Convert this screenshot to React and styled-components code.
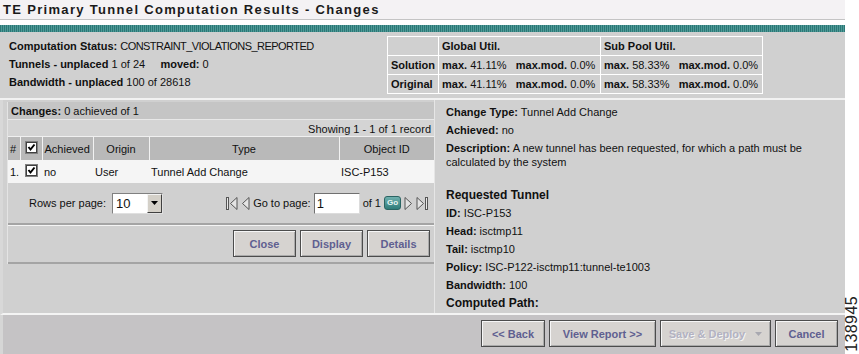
import React from 'react'
import styled, { createGlobalStyle } from 'styled-components'

const GlobalStyle = createGlobalStyle`
  body {
    margin: 0;
    background: #fff;
    font-family: 'Liberation Sans', Arial, sans-serif;
    font-size: 11px;
    color: #111;
  }
`

const Page = styled.div`
  display: flex;
  width: 859px;
  height: 354px;
  overflow: hidden;
`

const Main = styled.div`
  width: 845px;
  flex-shrink: 0;
  display: flex;
  flex-direction: column;
`

const Side = styled.div`
  flex: 1;
  min-width: 0;
  display: flex;
  align-items: flex-end;
  justify-content: center;
  padding-bottom: 2px;
`

const FigId = styled.span`
  writing-mode: vertical-rl;
  transform: rotate(180deg);
  font-size: 16px;
  line-height: 14px;
  color: #222;
  letter-spacing: 0.4px;
`

const Title = styled.div`
  height: 19px;
  line-height: 20px;
  padding-left: 3px;
  background: #f4f2f4;
  border-bottom: 1px solid #c4c4c4;
  font-size: 13px;
  font-weight: bold;
  letter-spacing: 1.32px;
  color: #1a1a1a;
`

const Stripe = styled.div`
  height: 7px;
  margin-top: 5px;
  background: repeating-linear-gradient(90deg, #2c7876 0 1px, #4f9a98 1px 2px);
`

const Summary = styled.div`
  display: flex;
  height: 68px;
  background: #d0d0d0;
  padding: 4px 0 0 9px;
  box-sizing: border-box;
  border-bottom: 2px solid #f2f2f2;
`

const Info = styled.div`
  width: 378px;
  padding-top: 1px;
  line-height: 18px;
`

const Caps = styled.span`
  letter-spacing: -0.55px;
`

const UtilTable = styled.table`
  border-collapse: collapse;
  height: 58px;
  td {
    border: 1px solid #fff;
    padding: 0 3px;
    white-space: nowrap;
    height: 17px;
  }
`

const Body = styled.div`
  display: flex;
  height: 213px;
  background: #d0d0d0;
  border-bottom: 2px solid #f4f4f4;
  border-left: 3px solid #d8d8d8;
`

const LeftCol = styled.div`
  width: 427px;
  padding: 2px 0 0 4px;
  border-right: 1px solid #e6e6e6;
  box-sizing: content-box;
`

const Panel = styled.div`
  border-left: 1px solid #e4e4e4;
  display: flex;
  flex-direction: column;
`

const PanelHead = styled.div`
  height: 17px;
  line-height: 19px;
  padding-left: 3px;
  background: #c5c5c5;
`

const Showing = styled.div`
  height: 16px;
  line-height: 18px;
  text-align: right;
  padding-right: 3px;
  background: #d4d4d4;
  border-top: 1px solid #e8e8e8;
  border-bottom: 1px solid #f0f0f0;
`

const Grid = styled.table`
  border-collapse: collapse;
  width: 426px;
  table-layout: fixed;
  font-size: 11px;
`

const Th = styled.td`
  height: 23px;
  background: #b9b9b9;
  border-left: ${p => (p.$first ? 'none' : '1px solid #f2f2f2')};
  text-align: ${p => p.$align || 'center'};
  padding: 0 2px;
  white-space: nowrap;
`

const Td = styled.td`
  height: 23px;
  background: #f5f5f5;
  text-align: ${p => p.$align || 'left'};
  padding: 0 2px;
  white-space: nowrap;
`

const Pager = styled.div`
  height: 40px;
  display: flex;
  align-items: center;
  justify-content: space-between;
  padding: 0 6px 0 21px;
  border-bottom: 2px solid #a4a4a4;
`

const PagerGroup = styled.div`
  display: flex;
  align-items: center;
  gap: ${p => p.$gap || 4}px;
`

const Select = styled.div`
  display: flex;
  width: 51px;
  height: 21px;
  background: #fff;
  border: 1px solid #808080;
  border-right-color: #e0e0e0;
  border-bottom-color: #e0e0e0;
  box-sizing: border-box;
  font-size: 13px;
  line-height: 19px;
`

const SelectValue = styled.span`
  flex: 1;
  padding-left: 3px;
`

const SelectArrow = styled.span`
  width: 15px;
  background: #d4d0c8;
  border: 1px solid;
  border-color: #f4f4f4 #404040 #404040 #f4f4f4;
  box-sizing: border-box;
  display: flex;
  align-items: center;
  justify-content: center;
`

const PageInput = styled.div`
  width: 46px;
  height: 21px;
  background: #fff;
  border: 1px solid #707070;
  border-right-color: #dcdcdc;
  border-bottom-color: #dcdcdc;
  box-sizing: border-box;
  font-size: 13px;
  line-height: 19px;
  padding-left: 2px;
`

const GoBtn = styled.span`
  width: 17px;
  height: 14px;
  border-radius: 3px;
  background: linear-gradient(#6fb0ae, #2f7c7a);
  border: 1px solid #2a6463;
  box-sizing: border-box;
  color: #e8f4f4;
  font-size: 8px;
  font-weight: bold;
  line-height: 12px;
  text-align: center;
`

const ButtonRow = styled.div`
  display: flex;
  justify-content: flex-end;
  gap: 4px;
  padding: 4px 4px 5px 0;
  border-top: 1px solid #f4f4f4;
  border-bottom: 2px solid #a4a4a4;
`

const Btn = styled.button`
  width: ${p => p.$w}px;
  height: 27px;
  padding: 0;
  background: #d6d3d0;
  border: 1px solid #4c4c4c;
  box-shadow: inset 1px 1px #f6f6f6, inset -1px -1px #aaa;
  font-family: 'Liberation Sans', Arial, sans-serif;
  font-size: 11px;
  font-weight: bold;
  color: ${p => (p.$disabled ? '#b2b2c2' : '#5f5f90')};
  text-shadow: ${p => (p.$disabled ? '1px 1px #f4f4f4' : 'none')};
  display: flex;
  align-items: center;
  justify-content: center;
  gap: 10px;
`

const DropPart = styled.span`
  display: flex;
  align-items: center;
  height: 100%;
`

const Detail = styled.div`
  flex: 1;
  padding: 5px 20px 0 11px;
`

const Field = styled.div`
  line-height: 14px;
  margin-bottom: 4px;
  font-size: ${p => (p.$big ? 12 : 11)}px;
  font-weight: ${p => (p.$big ? 'bold' : 'normal')};
  margin-top: ${p => p.$gapTop || 0}px;
`

const Footer = styled.div`
  flex: 1;
  display: flex;
  justify-content: flex-end;
  gap: 4px;
  padding: 5px 7px 0 0;
  background: #c5c3c5;
  border-left: 3px solid #d6d6d6;
`

const Checkbox = () => (
  <svg width="13" height="13" viewBox="0 0 13 13">
    <rect x="0.5" y="0.5" width="12" height="12" fill="#fff" stroke="#808080" />
    <rect x="1.5" y="1.5" width="10" height="10" fill="#fff" stroke="#404040" />
    <polyline points="3.5,6 5.5,8.5 9.5,3.5" fill="none" stroke="#000" strokeWidth="2" />
  </svg>
)

const Arrow = ({ dir = 'left', bar }) => (
  <svg width={bar ? 12 : 9} height="15" viewBox={bar ? '0 0 12 15' : '0 0 9 15'}>
    <g transform={dir === 'right' ? `translate(${bar ? 12 : 9},0) scale(-1,1)` : undefined}>
      {bar && <rect x="0.5" y="1.5" width="2" height="12" fill="#e8e8e8" stroke="#555" />}
      <polygon
        points={bar ? '11,1.5 4.5,7.5 11,13.5' : '8,1.5 1.5,7.5 8,13.5'}
        fill="#e4e4e4"
        stroke="#555"
      />
    </g>
  </svg>
)

const Caret = ({ color = '#000' }) => (
  <svg width="7" height="4" viewBox="0 0 7 4">
    <polygon points="0,0 7,0 3.5,4" fill={color} />
  </svg>
)

export default function App() {
  return (
    <Page>
      <GlobalStyle />
      <Main>
        <Title>TE Primary Tunnel Computation Results - Changes</Title>
        <Stripe />
        <Summary>
          <Info>
            <div>
              <b>Computation Status:</b> <Caps>CONSTRAINT_VIOLATIONS_REPORTED</Caps>
            </div>
            <div>
              <b>Tunnels - unplaced</b> 1 of 24&nbsp;&nbsp;&nbsp;&nbsp; <b>moved:</b> 0
            </div>
            <div>
              <b>Bandwidth - unplaced</b> 100 of 28618
            </div>
          </Info>
          <UtilTable>
            <tbody>
              <tr>
                <td style={{ width: 44 }}></td>
                <td style={{ width: 155 }}>
                  <b>Global Util.</b>
                </td>
                <td style={{ width: 155 }}>
                  <b>Sub Pool Util.</b>
                </td>
              </tr>
              {['Solution', 'Original'].map(row => (
                <tr key={row}>
                  <td>
                    <b>{row}</b>
                  </td>
                  <td>
                    <b>max.</b> 41.11%&nbsp;&nbsp; <b>max.mod.</b> 0.0%
                  </td>
                  <td>
                    <b>max.</b> 58.33%&nbsp;&nbsp; <b>max.mod.</b> 0.0%
                  </td>
                </tr>
              ))}
            </tbody>
          </UtilTable>
        </Summary>
        <Body>
          <LeftCol>
            <Panel>
              <PanelHead>
                <b>Changes:</b> 0 achieved of 1
              </PanelHead>
              <Showing>Showing 1 - 1 of 1 record</Showing>
              <Grid>
                <colgroup>
                  <col style={{ width: 12 }} />
                  <col style={{ width: 22 }} />
                  <col style={{ width: 51 }} />
                  <col style={{ width: 56 }} />
                  <col style={{ width: 190 }} />
                  <col style={{ width: 95 }} />
                </colgroup>
                <tbody>
                  <tr>
                    <Th $first $align="left">#</Th>
                    <Th>
                      <Checkbox />
                    </Th>
                    <Th $align="left">Achieved</Th>
                    <Th>Origin</Th>
                    <Th>Type</Th>
                    <Th>Object ID</Th>
                  </tr>
                  <tr>
                    <Td>1.</Td>
                    <Td $align="center">
                      <Checkbox />
                    </Td>
                    <Td>no</Td>
                    <Td>User</Td>
                    <Td>Tunnel Add Change</Td>
                    <Td>ISC-P153</Td>
                  </tr>
                </tbody>
              </Grid>
              <Pager>
                <PagerGroup $gap={6}>
                  <span>Rows per page:</span>
                  <Select>
                    <SelectValue>10</SelectValue>
                    <SelectArrow>
                      <Caret />
                    </SelectArrow>
                  </Select>
                </PagerGroup>
                <PagerGroup $gap={3}>
                  <Arrow bar />
                  <Arrow />
                  <span>Go to page:</span>
                  <PageInput>1</PageInput>
                  <span>of 1</span>
                  <GoBtn>Go</GoBtn>
                  <Arrow dir="right" />
                  <Arrow dir="right" bar />
                </PagerGroup>
              </Pager>
              <ButtonRow>
                <Btn $w={63}>Close</Btn>
                <Btn $w={63}>Display</Btn>
                <Btn $w={63}>Details</Btn>
              </ButtonRow>
            </Panel>
          </LeftCol>
          <Detail>
            <Field>
              <b>Change Type:</b> Tunnel Add Change
            </Field>
            <Field>
              <b>Achieved:</b> no
            </Field>
            <Field>
              <b>Description:</b> A new tunnel has been requested, for which a path must be
              calculated by the system
            </Field>
            <Field $big $gapTop={19}>
              Requested Tunnel
            </Field>
            <Field>
              <b>ID:</b> ISC-P153
            </Field>
            <Field>
              <b>Head:</b> isctmp11
            </Field>
            <Field>
              <b>Tail:</b> isctmp10
            </Field>
            <Field>
              <b>Policy:</b> ISC-P122-isctmp11:tunnel-te1003
            </Field>
            <Field>
              <b>Bandwidth:</b> 100
            </Field>
            <Field $big>Computed Path:</Field>
          </Detail>
        </Body>
        <Footer>
          <Btn $w={64}>&lt;&lt; Back</Btn>
          <Btn $w={107}>View Report &gt;&gt;</Btn>
          <Btn $w={111} $disabled>
            <span>Save &amp; Deploy</span>
            <DropPart>
              <Caret color="#a8a8b0" />
            </DropPart>
          </Btn>
          <Btn $w={63}>Cancel</Btn>
        </Footer>
      </Main>
      <Side>
        <FigId>138945</FigId>
      </Side>
    </Page>
  )
}
